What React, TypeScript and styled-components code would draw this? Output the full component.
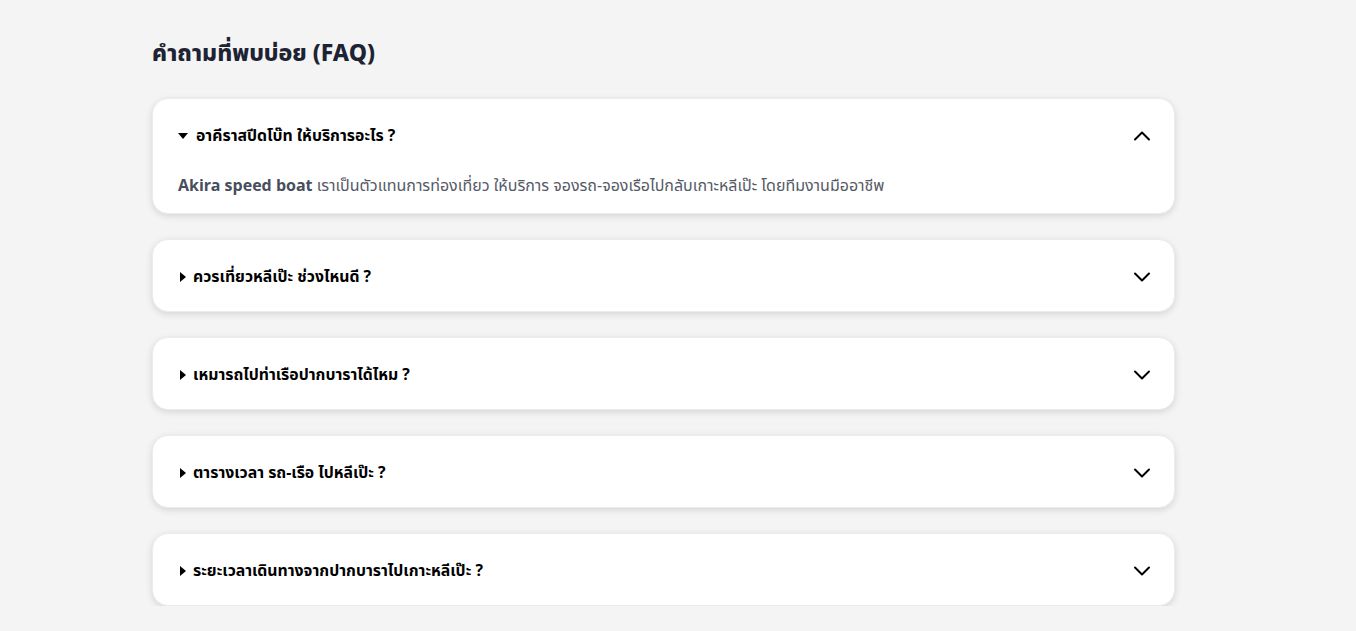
import React, { useState } from "react";
import { styled, createGlobalStyle } from "styled-components";
import { ChevronDown, ChevronUp } from "lucide-react";

const GlobalStyle = createGlobalStyle`
  html, body {
    margin: 0;
    padding: 0;
    background: #f4f4f4;
    font-family: "Noto Sans Thai", "Noto Sans", sans-serif;
  }
`;

const Page = styled.div`
  width: 1023px;
  margin: 0 0 0 152px;
  padding-top: 38px;
`;

const Heading = styled.h2`
  margin: 0 0 28px 0;
  font-size: 23px;
  line-height: 32px;
  font-weight: 800;
  color: #1d2333;
`;

const List = styled.div`
  display: flex;
  flex-direction: column;
  gap: 25px;
`;

const Card = styled.div`
  background: #ffffff;
  border-radius: 16px;
  box-shadow: 0 2px 7px rgba(0, 0, 0, 0.13);
  border: 1px solid #ececec;
`;

const Summary = styled.div`
  box-sizing: border-box;
  display: flex;
  align-items: center;
  height: 71px;
  padding: 3px 18px 0 25px;
  cursor: pointer;
`;

const Marker = styled.span<{ $open: boolean }>`
  width: 0;
  height: 0;
  border-style: solid;
  ${(p) =>
    p.$open
      ? `border-width: 6px 5px 0 5px; border-color: #000 transparent transparent transparent; margin-right: 8px;`
      : `border-width: 5px 0 5px 6px; border-color: transparent transparent transparent #000; margin: 0 7px 0 2px;`}
`;

const Question = styled.span`
  flex: 1;
  font-size: 15.8px;
  font-weight: 700;
  color: #000;
`;

const Answer = styled.div`
  padding: 0 25px 15px 25px;
  margin-top: 4px;
  font-size: 16px;
  line-height: 24px;
  color: #555a66;

  strong {
    color: #474e5e;
  }
`;

const faqs = [
  {
    q: "อาคีราสปีดโบ๊ท ให้บริการอะไร ?",
    a: (
      <>
        <strong>Akira speed boat</strong> เราเป็นตัวแทนการท่องเที่ยว ให้บริการ จองรถ-จองเรือไปกลับเกาะหลีเป๊ะ โดยทีมงานมืออาชีพ
      </>
    ),
  },
  { q: "ควรเที่ยวหลีเป๊ะ ช่วงไหนดี ?", a: null },
  { q: "เหมารถไปท่าเรือปากบาราได้ไหม ?", a: null },
  { q: "ตารางเวลา รถ-เรือ ไปหลีเป๊ะ ?", a: null },
  { q: "ระยะเวลาเดินทางจากปากบาราไปเกาะหลีเป๊ะ ?", a: null },
];

export default function App() {
  const [open, setOpen] = useState<number>(0);
  return (
    <>
      <GlobalStyle />
      <Page>
        <Heading>คำถามที่พบบ่อย (FAQ)</Heading>
        <List>
          {faqs.map((f, i) => {
            const isOpen = open === i;
            return (
              <Card key={i}>
                <Summary onClick={() => setOpen(isOpen ? -1 : i)}>
                  <Marker $open={isOpen} />
                  <Question>{f.q}</Question>
                  {isOpen ? (
                    <ChevronUp size={28} strokeWidth={1.7} color="#000" />
                  ) : (
                    <ChevronDown size={28} strokeWidth={1.7} color="#000" />
                  )}
                </Summary>
                {isOpen && f.a && <Answer>{f.a}</Answer>}
              </Card>
            );
          })}
        </List>
      </Page>
    </>
  );
}
